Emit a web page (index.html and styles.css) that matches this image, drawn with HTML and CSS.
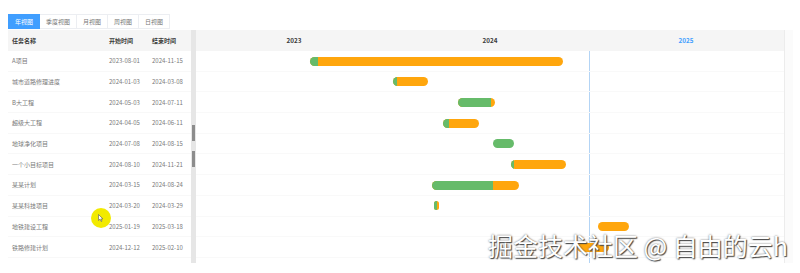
FILE: index.html
```html
<!DOCTYPE html>
<html>

<head>
    <meta charset="UTF-8">
    <title>甘特图</title>
    <link rel="stylesheet" href="styles.css">
</head>

<body>
    <div class="gantt">
        <div class="tabs">
            <span class="tab active">年视图</span>
            <span class="tab">季度视图</span>
            <span class="tab">月视图</span>
            <span class="tab">周视图</span>
            <span class="tab">日视图</span>
        </div>

        <div class="gantt-body">
            <div class="task-table">
                <div class="row head">
                    <span>任务名称</span><span>开始时间</span><span>结束时间</span>
                </div>
                <div class="row"><span>A项目</span><span>2023-08-01</span><span>2024-11-15</span></div>
                <div class="row"><span>城市道路修理进度</span><span>2024-01-03</span><span>2024-03-08</span></div>
                <div class="row"><span>B大工程</span><span>2024-05-03</span><span>2024-07-11</span></div>
                <div class="row"><span>超级大工程</span><span>2024-04-05</span><span>2024-06-11</span></div>
                <div class="row"><span>地球净化项目</span><span>2024-07-08</span><span>2024-08-15</span></div>
                <div class="row"><span>一个小目标项目</span><span>2024-08-10</span><span>2024-11-21</span></div>
                <div class="row"><span>某某计划</span><span>2024-03-15</span><span>2024-08-24</span></div>
                <div class="row"><span>某某科技项目</span><span>2024-03-20</span><span>2024-03-29</span></div>
                <div class="row"><span>地铁建设工程</span><span>2025-01-19</span><span>2025-03-18</span></div>
                <div class="row"><span>铁路修建计划</span><span>2024-12-12</span><span>2025-02-10</span></div>
            </div>

            <div class="splitter">
                <i class="grip"></i>
                <i class="grip"></i>
            </div>

            <div class="chart">
                <div class="chart-head">
                    <span>2023</span>
                    <span>2024</span>
                    <span class="current">2025</span>
                </div>
                <div class="chart-rows">
                    <div class="today" style="left: 393px"></div>
                    <div class="bar-row"><div class="bar" style="left: 114px; width: 253px"><div class="done" style="width: 3%"></div></div></div>
                    <div class="bar-row"><div class="bar" style="left: 197px; width: 35px"><div class="done" style="width: 12%"></div></div></div>
                    <div class="bar-row"><div class="bar" style="left: 262px; width: 37px"><div class="done" style="width: 90%"></div></div></div>
                    <div class="bar-row"><div class="bar" style="left: 247px; width: 36px"><div class="done" style="width: 16%"></div></div></div>
                    <div class="bar-row"><div class="bar" style="left: 297px; width: 21px"><div class="done" style="width: 100%"></div></div></div>
                    <div class="bar-row"><div class="bar" style="left: 315px; width: 55px"><div class="done" style="width: 6%"></div></div></div>
                    <div class="bar-row"><div class="bar" style="left: 236px; width: 87px"><div class="done" style="width: 70%"></div></div></div>
                    <div class="bar-row"><div class="bar" style="left: 238px; width: 5px"><div class="done" style="width: 50%"></div></div></div>
                    <div class="bar-row"><div class="bar" style="left: 402px; width: 31px"><div class="done" style="width: 0%"></div></div></div>
                    <div class="bar-row"><div class="bar" style="left: 381px; width: 32px"><div class="done" style="width: 0%"></div></div></div>
                </div>
            </div>

            <div class="vscroll"></div>
        </div>
    </div>

    <div class="cursor-dot">
        <svg width="6" height="8" viewBox="0 0 6 8"><path d="M0.5 0.5 L0.5 6.5 L2 5.2 L3.2 7.5 L4 7.1 L2.9 4.9 L5 4.9 Z" fill="#fff" stroke="#555" stroke-width="0.6"/></svg>
    </div>

    <div class="watermark">掘金技术社区 @ 自由的云h</div>
</body>

</html>
```

FILE: styles.css
```css
body {
    margin: 0;
    font-family: "Noto Sans CJK SC", "Noto Sans", sans-serif;
    background-color: #fff;
    color: #606266;
    position: relative;
    height: 273px;
    overflow: hidden;
}

.gantt {
    margin-left: 8px;
    width: 784px;
    padding-top: 14px;
}

.tabs {
    display: flex;
    height: 15px;
    margin-bottom: 1px;
}

.tab {
    display: flex;
    align-items: center;
    padding: 0 6px;
    font-size: 6px;
    color: #777;
    border: 1px solid #eceef2;
    border-left: none;
    background-color: #fff;
}

.tab:first-child {
    border-left: 1px solid #eceef2;
}

.tab.active {
    background-color: #409eff;
    border-color: #409eff;
    color: #fff;
}

.gantt-body {
    display: flex;
    height: 233px;
}

/* left side table */
.task-table {
    width: 183px;
    flex: none;
}

.row {
    display: grid;
    grid-template-columns: 97px 43px 1fr;
    align-items: center;
    height: 20.7px;
    padding-left: 4px;
    font-size: 6px;
    color: #7a7a7a;
    border-bottom: 1px solid #f8f8f8;
    box-sizing: border-box;
    white-space: nowrap;
}

.row.head {
    height: 21px;
    background-color: #f5f5f5;
    color: #3a3a3a;
    font-weight: bold;
    border-bottom: none;
}

.splitter {
    width: 5px;
    flex: none;
    background-color: #e6e6e6;
    display: flex;
    flex-direction: column;
    padding-top: 95px;
    gap: 10px;
    box-sizing: border-box;
}

.grip {
    display: block;
    height: 16px;
    margin: 0 1px;
    background-color: #8c8c8c;
}

/* chart side */
.chart {
    width: 588px;
    flex: none;
}

.chart-head {
    display: grid;
    grid-template-columns: repeat(3, 196px);
    height: 21px;
    align-items: center;
    background-color: #f5f5f5;
    font-size: 6.3px;
    font-weight: bold;
    color: #3a3a3a;
    text-align: center;
}

.chart-head .current {
    color: #409eff;
}

.chart-rows {
    position: relative;
}

.today {
    position: absolute;
    top: 0;
    bottom: -5px;
    width: 1px;
    background-color: #b3d4f5;
}

.bar-row {
    position: relative;
    height: 20.7px;
    border-bottom: 1px solid #f9f9f9;
    box-sizing: border-box;
}

.bar {
    position: absolute;
    top: 5.5px;
    height: 9px;
    border-radius: 5px;
    background-color: #ffa60d;
    overflow: hidden;
}

.done {
    height: 100%;
    background-color: #66bb6a;
}

.vscroll {
    width: 8px;
    flex: none;
    border-left: 1px solid #ececec;
    background-color: #fbfbfb;
}

/* screen recording overlays */
.cursor-dot {
    position: absolute;
    left: 91px;
    top: 208px;
    width: 20px;
    height: 20px;
    border-radius: 50%;
    background-color: #f2ea00;
    display: flex;
    align-items: center;
    justify-content: center;
}

.watermark {
    position: absolute;
    right: 12px;
    top: 230px;
    font-size: 25px;
    line-height: 30px;
    color: #fff;
    white-space: nowrap;
    text-shadow: 1px 1px 1px #444, 0 0 2px #666;
}
```
